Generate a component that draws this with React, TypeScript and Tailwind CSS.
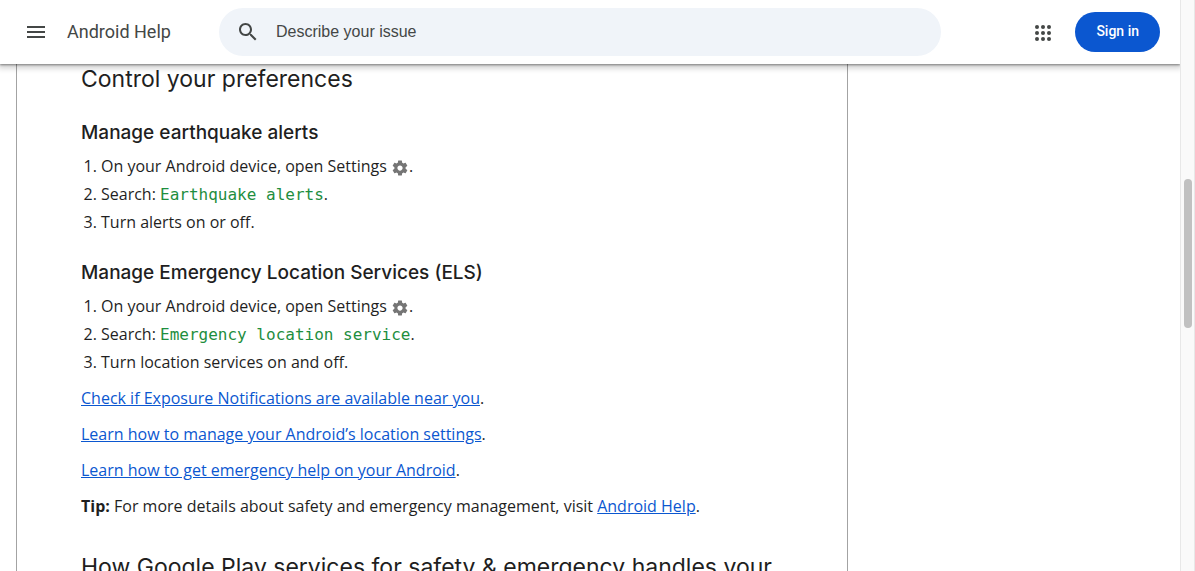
import type { ReactNode } from "react";

function SettingsIcon() {
  return (
    <svg viewBox="0 0 24 24" className="inline-block size-[18px] align-[-5px]" fill="#757575" role="img" aria-label="Settings">
      <path d="M19.43 12.98c.04-.32.07-.64.07-.98s-.03-.66-.07-.98l2.11-1.65c.19-.15.24-.42.12-.64l-2-3.46c-.12-.22-.39-.3-.61-.22l-2.49 1c-.52-.4-1.08-.73-1.69-.98l-.38-2.65C14.46 2.18 14.25 2 14 2h-4c-.25 0-.46.18-.49.42l-.38 2.65c-.61.25-1.17.59-1.69.98l-2.49-1c-.23-.09-.49 0-.61.22l-2 3.46c-.13.22-.07.49.12.64l2.11 1.65c-.04.32-.07.65-.07.98s.03.66.07.98l-2.11 1.65c-.19.15-.24.42-.12.64l2 3.46c.12.22.39.3.61.22l2.49-1c.52.4 1.08.73 1.69.98l.38 2.65c.03.24.24.42.49.42h4c.25 0 .46-.18.49-.42l.38-2.65c.61-.25 1.17-.59 1.69-.98l2.49 1c.23.09.49 0 .61-.22l2-3.46c.12-.22.07-.49-.12-.64l-2.11-1.65zM12 15.5c-1.93 0-3.5-1.57-3.5-3.5s1.57-3.5 3.5-3.5 3.5 1.57 3.5 3.5-1.57 3.5-3.5 3.5z" />
    </svg>
  );
}

function Link({ children }: { children: ReactNode }) {
  return (
    <a href="#" className="text-[#0b57d0] underline">
      {children}
    </a>
  );
}

function SectionHeading({ children }: { children: ReactNode }) {
  return <h2 className="mb-[25px] font-[Inter,sans-serif] text-[23px] leading-[30px]">{children}</h2>;
}

function SubHeading({ children }: { children: ReactNode }) {
  return <h3 className="mt-[23px] mb-[5px] font-[Inter,sans-serif] text-[19px] leading-7 font-medium">{children}</h3>;
}

function Steps({ term, last }: { term: string; last: string }) {
  return (
    <ol className="list-decimal pl-5 leading-7">
      <li>
        On your Android device, open Settings <SettingsIcon />.
      </li>
      <li>
        Search: <code className="font-['DejaVu_Sans_Mono',monospace] text-[16px] leading-none text-[#1e8e3e]">{term}</code>.
      </li>
      <li>{last}</li>
    </ol>
  );
}

function Header() {
  return (
    <header className="relative z-10 flex h-16 shrink-0 items-center bg-white pr-5 pl-6 shadow-[0_1px_2px_rgba(0,0,0,0.4),0_2px_6px_2px_rgba(0,0,0,0.2)]">
      <div className="flex w-[195px] shrink-0 items-center gap-[19px]">
        <button type="button" aria-label="Main menu" className="size-6">
          <svg viewBox="0 0 24 24" fill="#444746" className="size-6">
            <path d="M3 18h18v-2H3v2zm0-5h18v-2H3v2zm0-7v2h18V6H3z" />
          </svg>
        </button>
        <a href="#" className="font-[Roboto,sans-serif] text-lg whitespace-nowrap text-[#444746]">
          Android Help
        </a>
      </div>
      <form className="flex h-12 max-w-[722px] flex-1 items-center gap-4 rounded-full bg-[#f0f4f9] px-[17px]">
        <button type="button" aria-label="Search" className="size-6 shrink-0">
          <svg viewBox="0 0 24 24" fill="#444746" className="size-6">
            <path d="M15.5 14h-.79l-.28-.27C15.41 12.59 16 11.11 16 9.5 16 5.91 13.09 3 9.5 3S3 5.91 3 9.5 5.91 16 9.5 16c1.61 0 3.09-.59 4.23-1.57l.27.28v.79l5 4.99L20.49 19l-4.99-5zm-6 0C7.01 14 5 11.99 5 9.5S7.01 5 9.5 5 14 7.01 14 9.5 11.99 14 9.5 14z" />
          </svg>
        </button>
        <input
          type="text"
          aria-label="Describe your issue"
          placeholder="Describe your issue"
          className="min-w-0 flex-1 bg-transparent font-['Liberation_Sans',Arial,sans-serif] text-base text-[#444746] outline-none placeholder:text-[#444746]"
        />
      </form>
      <div className="ml-auto flex items-center gap-5">
        <button type="button" aria-label="Google apps" className="size-6">
          <svg viewBox="0 0 24 24" fill="#444746" className="size-6">
            {[6, 12, 18].map((y) => [6, 12, 18].map((x) => <circle key={`${x}-${y}`} cx={x} cy={y + 1} r="2" />))}
          </svg>
        </button>
        <a
          href="#"
          className="flex h-10 items-center justify-center rounded-full bg-[#0b57d0] px-[21px] pb-0.5 font-[Roboto,sans-serif] text-sm font-medium whitespace-nowrap text-white"
        >
          Sign in
        </a>
      </div>
    </header>
  );
}

export default function App() {
  return (
    <div className="flex h-screen overflow-hidden bg-white font-['Open_Sans',sans-serif] text-base text-[#1f1f1f]">
      <div className="flex min-w-0 flex-1 flex-col">
        <Header />
        <main className="min-h-0 flex-1 overflow-hidden px-4">
          <article className="max-w-[832px] border-x border-[#a3a3a3] px-16">
            <SectionHeading>Control your preferences</SectionHeading>
            <SubHeading>Manage earthquake alerts</SubHeading>
            <Steps term="Earthquake alerts" last="Turn alerts on or off." />
            <SubHeading>Manage Emergency Location Services (ELS)</SubHeading>
            <Steps term="Emergency location service" last="Turn location services on and off." />
            <div className="mt-2 mb-8 flex flex-col gap-2 leading-7">
              <p>
                <Link>Check if Exposure Notifications are available near you</Link>.
              </p>
              <p>
                <Link>Learn how to manage your Android’s location settings</Link>.
              </p>
              <p>
                <Link>Learn how to get emergency help on your Android</Link>.
              </p>
              <p>
                <b>Tip:</b> For more details about safety and emergency management, visit <Link>Android Help</Link>.
              </p>
            </div>
            <SectionHeading>How Google Play services for safety &amp; emergency handles your</SectionHeading>
          </article>
        </main>
      </div>
      <div className="relative z-20 flex w-[15px] shrink-0 flex-col items-center border-x border-[#e8e8e8] bg-[#fafafa] pt-[179px]">
        <div className="h-[149px] w-2 rounded-full bg-[#c1c1c1]" />
      </div>
    </div>
  );
}
